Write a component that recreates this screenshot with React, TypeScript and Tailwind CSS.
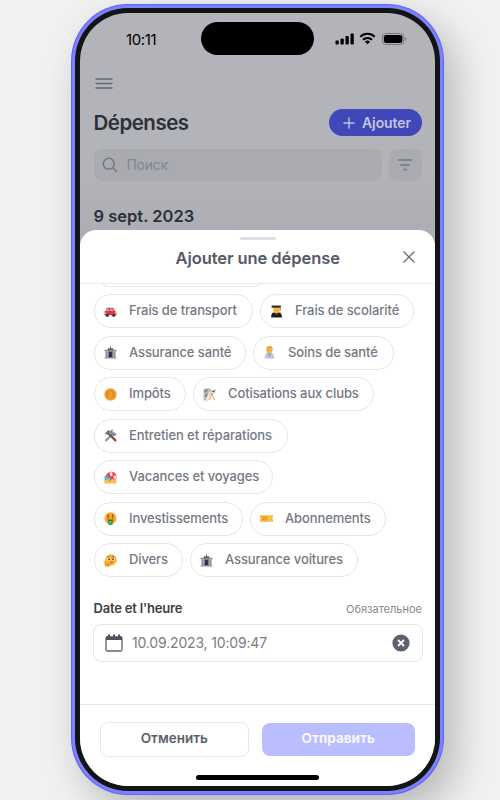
import React from "react";

type IconName =
  | "car" | "grad" | "bank" | "health" | "coin" | "club" | "tools"
  | "beach" | "money" | "ticket" | "think";

function Emoji({ name }: { name: IconName }) {
  return (
    <svg viewBox="0 0 24 24" className="h-[13px] w-[13px] shrink-0">
      {name === "car" && (
        <>
          <path d="M5 5h10c3 0 4 3 5 6l3 2v6H1v-7l2-1z" fill="#e8343c" />
          <path d="M5 7h4v4H3.500zM11 7h4l3 4h-7z" fill="#8fc4e8" />
          <circle cx="6" cy="19" r="3" fill="#333b48" />
          <circle cx="18" cy="19" r="3" fill="#333b48" />
          <path d="M1 14h3v2H1zM20 14h3v2h-3z" fill="#ffd36b" />
        </>
      )}
      {name === "grad" && (
        <>
          <path d="M2 23c0-8 4-10 10-10s10 2 10 10z" fill="#1d1c22" />
          <path d="M6 5h12v5c0 7-12 7-12 0z" fill="#f6b62f" />
          <path d="M3 1h17v4H3z" fill="#2b2525" />
          <path d="M18 4h2v6h-2z" fill="#d18a28" />
          <path d="m9 15 3 3 3-3z" fill="#7d6038" />
        </>
      )}
      {name === "bank" && (
        <>
          <path d="M1 7h22v3H1z" fill="#84858a" />
          <path d="M2 10h20v11H2z" fill="#b9b9bc" />
          <path d="M4 10h2v11H4zM18 10h2v11h-2z" fill="#8d8d94" />
          <path d="M7 6h10v16H7z" fill="#8b8890" />
          <path d="M7 4h10v4H7zM11 1h2v4h-2z" fill="#66666d" />
          <path d="M9 11h6v10H9z" fill="#382b50" />
          <path d="M1 21h22v2H1z" fill="#88888c" />
        </>
      )}
      {name === "health" && (
        <>
          <path d="M3 23c0-8 3-11 9-11s9 3 9 11z" fill="#b9cae5" />
          <path d="m8 12 4 10 4-10z" fill="#a49bd0" />
          <path d="M6 7c0-9 12-9 12 0 0 8-12 10-12 0z" fill="#f5b944" />
          <path d="M6 6c1-8 11-8 12 0l-3-2H9z" fill="#e5a42b" />
          <path d="M9 8h1v1H9zM14 8h1v1h-1z" fill="#78511f" />
        </>
      )}
      {name === "coin" && (
        <>
          <circle cx="12" cy="12" r="11.500" fill="#f3a52c" />
          <circle cx="12" cy="12" r="8.500" fill="#e08e22" />
          <path d="M8 17h8M9 14h6M10 8h4v6h-4z" stroke="#efb044" strokeWidth="1.200" fill="none" />
        </>
      )}
      {name === "club" && (
        <>
          <path d="M1 1h13l2 5-7 17H1z" fill="#b9bcbc" />
          <path d="m2 5 8-3-5 7zM3 14l6-5-3 9z" fill="#777d7c" />
          <path d="m5 22 7-16 3 2-6 15z" fill="#e8e8de" />
          <path d="m15 8 4 2-1 6-5-3z" fill="#e5b53f" />
          <circle cx="19" cy="6" r="2" fill="#5a5546" />
          <path d="m18 15 3 7M15 15l-3 7" stroke="#c5a873" strokeWidth="2" />
          <path d="m20 9 3-6" stroke="#4b9bd0" strokeWidth="2" />
        </>
      )}
      {name === "tools" && (
        <>
          <path d="M4 21 18 7" stroke="#949ca8" strokeWidth="4" strokeLinecap="round" />
          <path d="m17 1-2 5 3 3 5-2-1 5-5 1-6-6 2-5z" fill="#7e8894" />
          <path d="m8 8 13 13" stroke="#80493a" strokeWidth="4" strokeLinecap="round" />
          <path d="M2 8 8 2l5 3-3 1 1 2-4 4-2-3-2 1z" fill="#69717e" />
        </>
      )}
      {name === "beach" && (
        <>
          <path d="M1 9h14v10H1z" fill="#45c5d8" />
          <path d="M1 19c5-4 8-4 11-3l11 2v5H1z" fill="#ffbd4b" />
          <path d="M3 9C7 0 18-1 22 6c2 4 1 8-1 12z" fill="#f0434b" />
          <path d="m10 3 5-1 1 6-4 2zM17 9l5-1 0 6-2 3z" fill="#fff1ec" />
          <path d="m13 12-3 8" stroke="#8a665b" strokeWidth="1.300" />
        </>
      )}
      {name === "money" && (
        <>
          <circle cx="12" cy="11.500" r="11" fill="#f9aa29" />
          <path d="M6.500 4h3v8h-3zM14.500 4h3v8h-3z" fill="#a66328" />
          <path d="M6 14h12c-1 6-11 6-12 0z" fill="#8b4e28" />
          <path d="M8 16h8v7c-3 2-8 1-8-1z" fill="#11ad5c" />
          <path d="M11 17h2v4h-2z" fill="#55d788" />
        </>
      )}
      {name === "ticket" && (
        <>
          <path d="M0 6h24v4c-2 1-2 3 0 4v4H0v-4c2-1 2-3 0-4z" fill="#f8b735" />
          <path d="M4 10h10M4 14h8" stroke="#d68b1c" strokeWidth="1.500" />
          <path d="M18 6v12" stroke="#fff0bd" strokeWidth="1.500" strokeDasharray="2 1" />
        </>
      )}
      {name === "think" && (
        <>
          <circle cx="13" cy="11" r="10.500" fill="#fcb334" />
          <circle cx="9" cy="9.500" r="2.500" fill="#fff" />
          <circle cx="17" cy="9.500" r="2.500" fill="#fff" />
          <circle cx="9.300" cy="9.500" r="1.700" fill="#553516" />
          <circle cx="16.700" cy="9.500" r="1.700" fill="#553516" />
          <path d="m6 5 4-1M15 4l4 2M12 15.500l5-1" stroke="#70451c" strokeWidth="1.400" />
          <path d="M1 13c1-2 3-1 3 2v2l8-1c3 0 2 2 0 3l-1 2c-1 4-10 3-10-1z" fill="#f29727" />
        </>
      )}
    </svg>
  );
}

function Chip({ icon, label, size }: { icon: IconName; label: string; size: string }) {
  return (
    <div className={`flex h-[34px] shrink-0 items-center rounded-full border border-[#e5e6e8] pl-[9.500px] ${size}`}>
      <Emoji name={icon} />
      <span className="ml-[12px] whitespace-nowrap">{label}</span>
    </div>
  );
}

const rows: { icon: IconName; label: string; size: string }[][] = [
  [{ icon: "car", label: "Frais de transport", size: "w-[159px]" }, { icon: "grad", label: "Frais de scolarité", size: "w-[154.500px]" }],
  [{ icon: "bank", label: "Assurance santé", size: "w-[152px]" }, { icon: "health", label: "Soins de santé", size: "w-[141px]" }],
  [{ icon: "coin", label: "Impôts", size: "w-[92px]" }, { icon: "club", label: "Cotisations aux clubs", size: "w-[181px]" }],
  [{ icon: "tools", label: "Entretien et réparations", size: "w-[194px]" }],
  [{ icon: "beach", label: "Vacances et voyages", size: "w-[179.500px]" }],
  [{ icon: "money", label: "Investissements", size: "w-[149px]" }, { icon: "ticket", label: "Abonnements", size: "w-[136px]" }],
  [{ icon: "think", label: "Divers", size: "w-[89px]" }, { icon: "bank", label: "Assurance voitures", size: "w-[168px]" }],
];

function StatusBar() {
  return (
    <div className="flex h-[59px] items-start pt-[9px] text-black">
      <span className="ml-[46px] mt-[7.500px] w-[74.500px] text-[15px] leading-[20px] tracking-[-0.35px]">10:11</span>
      <div className="h-[33px] w-[113px] rounded-full bg-black" />
      <svg viewBox="0 0 72 14" className="ml-[21px] mt-[10px] h-[14px] w-[72px]">
        <g>
          <rect x="0.500" y="8.500" width="3.300" height="4" rx="1" />
          <rect x="5.500" y="6.500" width="3.300" height="6" rx="1" />
          <rect x="10.500" y="4" width="3.300" height="8.500" rx="1" />
          <rect x="15.500" y="1.500" width="3.300" height="11" rx="1" />
        </g>
        <g fill="none" stroke="black" strokeWidth="2">
          <path d="M25.300 4.700a10.200 10.200 0 0 1 14.400 0M28 7.700a6.500 6.500 0 0 1 9 0" />
        </g>
        <path d="M32.500 12.300 29.900 9.700a3.800 3.800 0 0 1 5.200 0z" />
        <rect x="47.400" y="1.500" width="21.500" height="11" rx="3.500" fill="none" stroke="#77777b" />
        <rect x="48.900" y="3" width="18.500" height="8" rx="2.200" />
        <path d="M70.300 5v4c1.500-.5 1.500-3.500 0-4z" fill="#77777b" />
      </svg>
    </div>
  );
}

export default function App() {
  return (
    <main className="h-[800px] w-[500px] overflow-hidden bg-[#f1f1f1] pl-[70.500px] pt-[4px] font-['Inter','Liberation_Sans',sans-serif] antialiased">
      <div className="h-[791px] w-[373px] rounded-[57px] bg-[#6065f7] p-px shadow-[12px_16px_38px_rgba(0,0,0,0.24)]">
        <div className="h-full rounded-[56px] bg-[#7b80fb] p-[3px]">
          <div className="h-full rounded-[53px] bg-[#131416] pb-[5px] pl-[5.500px] pr-[4.500px] pt-[5px]">
            <div className="flex h-[773px] flex-col overflow-hidden rounded-[48px] bg-[linear-gradient(#b3b4b9_0px,#b3b4b9_160px,#a9acb2_240px)]">
              <StatusBar />
              <header className="h-[157.500px] shrink-0 px-[13.500px] text-[#2d3038]">
                <svg viewBox="0 0 18 12" className="ml-[1px] mt-[6px] h-[12px] w-[18px] text-[#626872]" stroke="currentColor" strokeWidth="1.300"><path d="M.5 1h17M.5 5.500h17M.5 10h17" /></svg>
                <div className="mt-[19px] flex h-[27px] items-center justify-between">
                  <h1 className="text-[20.500px] font-semibold leading-[27px] tracking-[-0.5px]">Dépenses</h1>
                  <button className="flex h-[27px] w-[92.500px] items-center rounded-full bg-[#4047b8] pl-[14px] text-[14px] font-semibold text-[#c3c5e0]">
                    <svg viewBox="0 0 12 12" className="mr-[7px] h-3 w-3" stroke="currentColor" strokeWidth="1.400"><path d="M.5 6h11M6 .5v11" /></svg>
                    <span className="tracking-[-0.1px]">Ajouter</span>
                  </button>
                </div>
                <div className="mt-[13px] flex gap-[7px]">
                  <div className="flex h-[32px] w-[288px] items-center rounded-lg bg-[#aaabb1] pl-[8px] text-[14px] tracking-[-0.3px] text-[#818791]">
                    <svg viewBox="0 0 16 16" className="mr-[9px] h-4 w-4" fill="none" stroke="#717780" strokeWidth="1.400"><circle cx="6.800" cy="6.800" r="5.500" /><path d="m11 11 4 4" /></svg>
                    <span className="pb-px">Поиск</span>
                  </div>
                  <div className="flex h-[32px] w-[33px] items-center justify-center rounded-lg bg-[#aaabb1]">
                    <svg viewBox="0 0 16 12" className="h-3 w-4" stroke="#717780" strokeWidth="1.300"><path d="M1 1h14M3.500 6h9M6.300 10.500h3.400" /></svg>
                  </div>
                </div>
                <h2 className="mt-[24.500px] text-[16.500px] font-semibold leading-[20px] tracking-[0px]">9 sept. 2023</h2>
              </header>

              <section className="flex min-h-0 flex-1 flex-col rounded-t-[16px] bg-white">
                <div className="h-[54px] shrink-0 border-b border-[#e9eaec] pt-[7.500px]">
                  <div className="mx-auto h-[3px] w-[36px] rounded-full bg-[#dedfe3]" />
                  <div className="mt-[5px] flex h-[24px] items-center pl-[95.500px]">
                    <h3 className="w-[227px] whitespace-nowrap pt-[2px] text-[16.500px] font-semibold tracking-[-0.07px] text-[#555a64]">Ajouter une dépense</h3>
                    <svg viewBox="0 0 12 12" className="h-3 w-3" stroke="#646a75" strokeWidth="1.300"><path d="m.5.5 11 11M11.500.5l-11 11" /></svg>
                  </div>
                </div>
                <div className="flex h-[420px] shrink-0 flex-col overflow-hidden px-[13px]">
                  <div className="ml-[.5px] flex h-[3px] w-[176px] shrink-0 flex-col justify-end overflow-hidden"><div className="h-[34px] shrink-0 rounded-full border border-[#e5e6e8]" /></div>
                  <div className="ml-[.5px] mt-[7.500px] flex flex-col gap-[7.500px] text-[13px] font-medium tracking-[-0.1px] text-[#747984]">
                    {rows.map((row) => <div className="flex gap-[7px]" key={row[0].label}>{row.map((c) => <Chip key={c.label} {...c} />)}</div>)}
                  </div>
                  <div className="mt-[23px] flex h-[18px] items-center justify-between">
                    <span className="pl-[.5px] text-[13px] font-semibold tracking-[-0.2px] text-[#3b3e45]">Date et l'heure</span>
                    <span className="pt-px text-[11px] tracking-[0px] text-[#858993]">Обязательное</span>
                  </div>
                  <div className="mt-[6px] flex h-[38px] w-[329.500px] shrink-0 items-center rounded-lg border border-[#e5e6e9] pl-[10.500px] text-[14px] tracking-[-0.17px] text-[#777c85]">
                    <svg viewBox="0 0 18 18" className="mr-[9.500px] h-[18px] w-[18px]"><rect x="1" y="3" width="16" height="14" rx="1.500" fill="none" stroke="#5c626d" strokeWidth="1.300" /><path d="M1 6V3l1-1h1V.5h2V3h3V.5h2V3h3V.5h2V2h1l1 1v3z" fill="#4c535f" /></svg>
                    <span className="w-[260px] pb-px">10.09.2023, 10:09:47</span>
                    <svg viewBox="0 0 18 18" className="h-[18px] w-[18px]"><circle cx="9" cy="9" r="8.600" fill="#5b616e" /><path d="m6 6 6 6m0-6-6 6" stroke="white" strokeWidth="1.800" /></svg>
                  </div>
                </div>
                <footer className="flex flex-1 flex-col border-t border-[#e7e8eb] pt-[17px]">
                  <div className="flex items-center gap-[13px] pl-[19.500px] text-[13.500px] font-semibold">
                    <button className="h-[35px] w-[149.500px] rounded-lg border border-[#e5e6e9] pb-[2px] text-[#5c6069]">Отменить</button>
                    <button className="h-[33px] w-[152.500px] rounded-lg bg-[#babdff] pb-[2px] font-bold text-[#f8f8ff]">Отправить</button>
                  </div>
                  <div className="mx-auto mt-[18px] h-[5px] w-[123px] rounded-full bg-black" />
                </footer>
              </section>
            </div>
          </div>
        </div>
      </div>
    </main>
  );
}
